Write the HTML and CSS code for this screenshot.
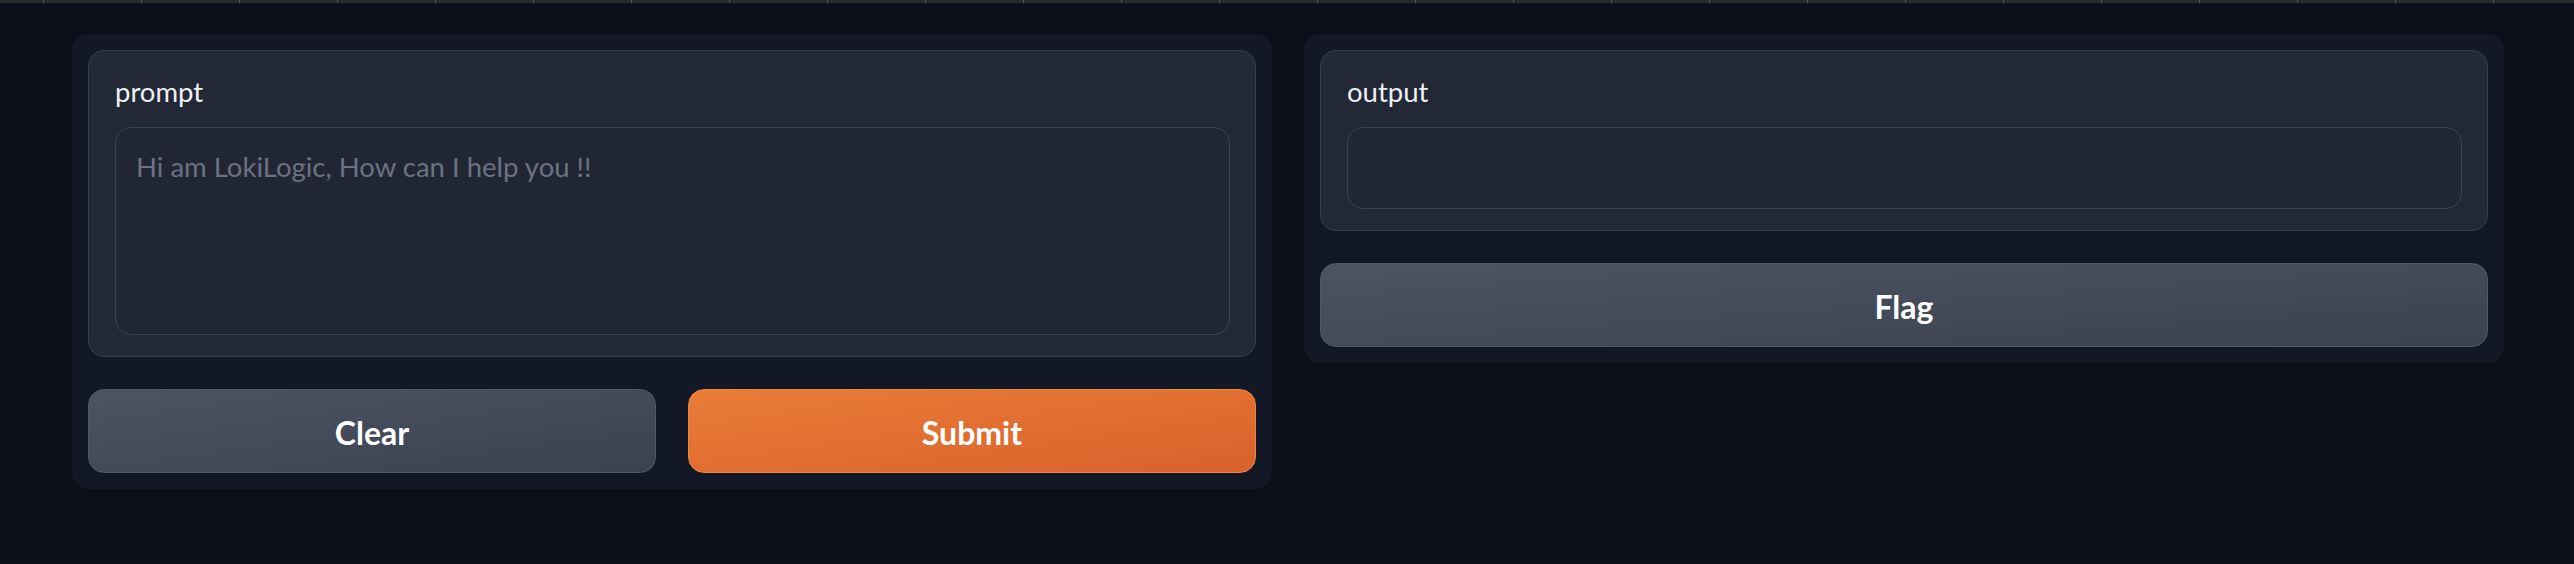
FILE: index.html
```html
<!DOCTYPE html>
<html lang="en">
<head>
<meta charset="utf-8">
<title>LokiLogic</title>
<link rel="stylesheet" href="styles.css">
</head>
<body>
<div class="topstrip"></div>
<main class="app">
  <section class="panel">
    <div class="block">
      <label class="label" for="prompt">prompt</label>
      <textarea id="prompt" class="field field-area" placeholder="Hi am LokiLogic, How can I help you !!"></textarea>
    </div>
    <div class="btn-row">
      <button class="btn btn-secondary">Clear</button>
      <button class="btn btn-primary">Submit</button>
    </div>
  </section>
  <section class="panel">
    <div class="block">
      <label class="label" for="output">output</label>
      <input id="output" class="field field-input" type="text">
    </div>
    <div class="btn-row">
      <button class="btn btn-secondary">Flag</button>
    </div>
  </section>
</main>
</body>
</html>
```

FILE: styles.css
```css
* { box-sizing: border-box; }

html, body {
  margin: 0;
  padding: 0;
  background: #0b0f19;
  width: 2574px;
  height: 564px;
  overflow: hidden;
  font-family: "Lato", "Noto Sans", sans-serif;
  color: #eceef2;
}

.topstrip {
  height: 3px;
  background-color: #2a2b2f;
  background-image: repeating-linear-gradient(to right,
    transparent 0, transparent 43px,
    #55575c 43px, #55575c 44px,
    transparent 44px, transparent 98px);
  background-size: 98px 3px;
}

.app {
  display: flex;
  align-items: flex-start;
  gap: 32px;
  width: 2432px;
  margin: 31px 0 0 72px;
}

.panel {
  flex: 1 1 0;
  display: flex;
  flex-direction: column;
  gap: 32px;
  padding: 16px;
  background: #121826;
  border-radius: 16px;
}

.block {
  display: flex;
  flex-direction: column;
  padding: 20px 25px 21px 26px;
  background: #222836;
  border: 1px solid #373d4b;
  border-radius: 16px;
}

.label {
  font-size: 27.5px;
  line-height: 42px;
  height: 42px;
  margin-bottom: 14px;
  color: #eef0f4;
}

.field {
  display: block;
  width: 100%;
  margin: 0;
  padding: 18px 20px 20px;
  font-family: inherit;
  font-size: 27.5px;
  line-height: 42px;
  color: #eef0f4;
  background: #212634;
  border: 1px solid #3b4250;
  border-radius: 16px;
  outline: none;
  resize: none;
}

.field::placeholder {
  color: #6b7281;
  opacity: 1;
}

.field-area { height: 208px; }
.field-input { height: 82px; }

.btn-row {
  display: flex;
  gap: 32px;
}

.btn {
  flex: 1 1 0;
  height: 84px;
  margin: 0;
  padding: 2px 0 0;
  font-family: inherit;
  font-size: 32px;
  font-weight: 700;
  color: #ffffff;
  border-radius: 16px;
  cursor: pointer;
}

.btn-secondary {
  background: linear-gradient(to bottom right, #4c5362, #3a4250);
  border: 1px solid #505766;
}

.btn-primary {
  background: linear-gradient(to bottom right, #ea7c37, #d9612b);
  border: 1px solid #ec8640;
}
```
